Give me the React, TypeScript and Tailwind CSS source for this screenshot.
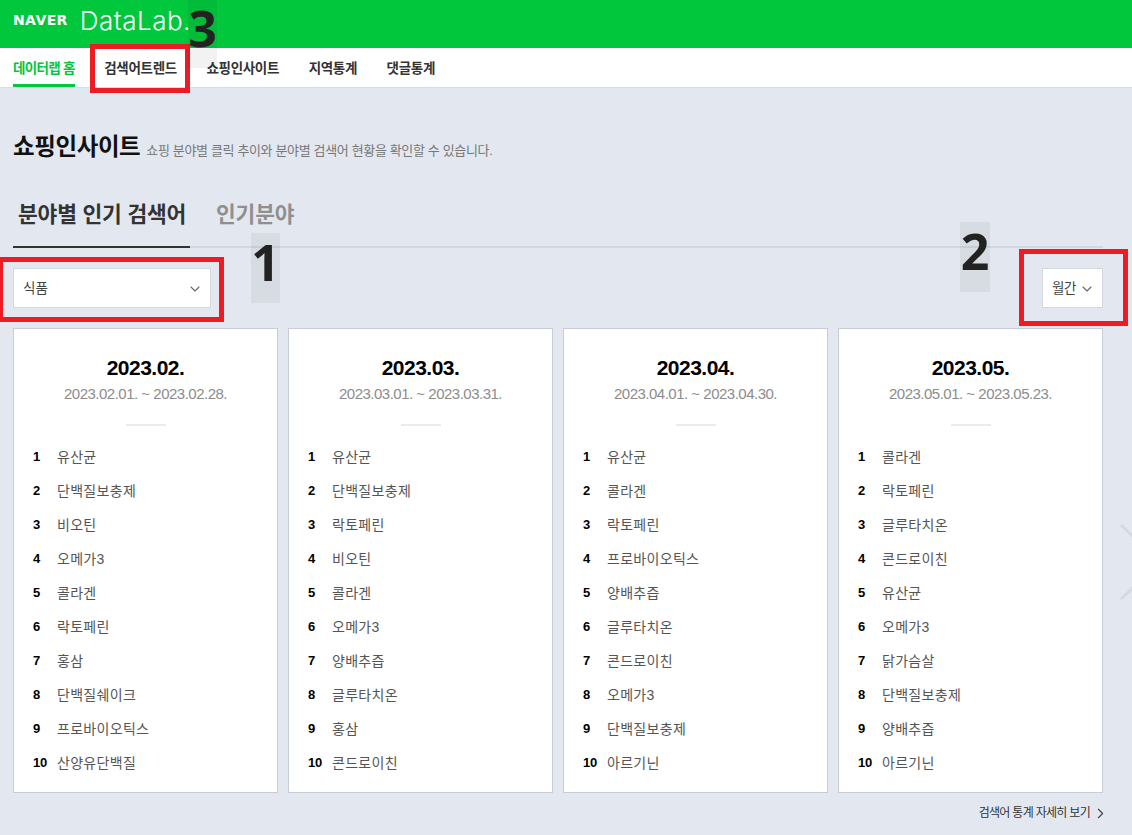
import { ChevronDown, ChevronRight } from 'lucide-react';

const font = { kr: "font-['Liberation_Sans','Noto_Sans_CJK_KR',sans-serif]" };

const navItems = ['데이터랩 홈', '검색어트렌드', '쇼핑인사이트', '지역통계', '댓글통계'];

const months = [
  {
    title: '2023.02.',
    range: '2023.02.01. ~ 2023.02.28.',
    items: ['유산균', '단백질보충제', '비오틴', '오메가3', '콜라겐', '락토페린', '홍삼', '단백질쉐이크', '프로바이오틱스', '산양유단백질'],
  },
  {
    title: '2023.03.',
    range: '2023.03.01. ~ 2023.03.31.',
    items: ['유산균', '단백질보충제', '락토페린', '비오틴', '콜라겐', '오메가3', '양배추즙', '글루타치온', '홍삼', '콘드로이친'],
  },
  {
    title: '2023.04.',
    range: '2023.04.01. ~ 2023.04.30.',
    items: ['유산균', '콜라겐', '락토페린', '프로바이오틱스', '양배추즙', '글루타치온', '콘드로이친', '오메가3', '단백질보충제', '아르기닌'],
  },
  {
    title: '2023.05.',
    range: '2023.05.01. ~ 2023.05.23.',
    items: ['콜라겐', '락토페린', '글루타치온', '콘드로이친', '유산균', '오메가3', '닭가슴살', '단백질보충제', '양배추즙', '아르기닌'],
  },
];

function MonthCard({ title, range, items }: { title: string; range: string; items: string[] }) {
  return (
    <div className="w-[265px] h-[465px] bg-white border border-[#c6ccd8] pt-[26px]">
      <p className="text-center text-[21px] leading-[26px] font-bold tracking-[-0.5px] text-black">{title}</p>
      <p className="text-center text-[15px] leading-[26px] tracking-[-0.5px] text-[#8c8c8c]">{range}</p>
      <div className="w-10 h-[2px] bg-[#e8ecf1] mx-auto mt-[17px] mb-[14px]" />
      <ol className="pl-[19px]">
        {items.map((item, i) => (
          <li key={i} className="flex items-center h-[34px]">
            <span className="w-[24px] text-[13px] font-bold tracking-[-0.3px] text-black">{i + 1}</span>
            <span className="text-[14px] tracking-[0.3px] text-[#555]">{item}</span>
          </li>
        ))}
      </ol>
    </div>
  );
}

export default function App() {
  return (
    <div className={`relative w-full h-[835px] overflow-hidden bg-[#e3e8f0] ${font.kr}`}>
      <header className="h-[48px] bg-[#00c73c] flex items-center pl-[13px] pb-[7px] gap-[12px]">
        <span className="text-[14px] font-bold tracking-[0.4px] text-white font-['DejaVu_Sans',sans-serif]">NAVER</span>
        <span className="text-[26px] font-light tracking-[0.5px] text-white font-['Inter',sans-serif]">DataLab.</span>
      </header>

      <nav className="h-[40px] bg-white border-b border-[#d9dde3] flex gap-[29.5px] pl-[13px]">
        {navItems.map((item, i) => (
          <a
            key={item}
            className={`h-[39px] flex items-center text-[13.5px] font-bold ${
              i === 0
                ? 'pt-[6px] text-[#00c73c] border-b-[3px] border-[#00c73c] tracking-[-0.7px]'
                : 'pt-[3px] text-[#333] tracking-[-0.3px]'
            }`}
          >
            {item}
          </a>
        ))}
      </nav>

      <main className="w-[1090px] ml-[13px]">
        <div className="flex items-baseline gap-[6px] pt-[42px]">
          <h1 className="text-[23.5px] leading-[34px] font-bold tracking-[-0.4px] text-[#111]">쇼핑인사이트</h1>
          <p className="text-[13px] tracking-[-0.35px] text-[#777]">쇼핑 분야별 클릭 추이와 분야별 검색어 현황을 확인할 수 있습니다.</p>
        </div>

        <div className="flex mt-[21px] h-[63px] border-b-2 border-[#d3d8e0]">
          <div className="h-[63px] w-[177px] pl-[5px] border-b-2 border-[#333] text-[21.5px] leading-[60px] font-bold tracking-[-0.2px] text-[#333]">
            분야별 인기 검색어
          </div>
          <div className="ml-[26px] text-[21.5px] leading-[60px] font-bold tracking-[-0.2px] text-[#8f8f8f]">인기분야</div>
        </div>

        <div className="flex justify-between mt-[20px]">
          <div className="w-[198px] h-[40px] bg-white border border-[#d3d8e0] flex items-center justify-between pt-[2px] pl-[9px] pr-[7px] text-[13.5px] text-[#444]">
            식품
            <ChevronDown size={16} strokeWidth={1.6} className="text-[#666]" />
          </div>
          <div className="w-[61px] h-[40px] bg-white border border-[#d3d8e0] flex items-center justify-center pt-[2px] pl-[2px] gap-[3px] text-[13.5px] tracking-[-0.5px] text-[#444]">
            월간
            <ChevronDown size={16} strokeWidth={1.6} className="text-[#666]" />
          </div>
        </div>

        <div className="flex gap-[10px] mt-[20px]">
          {months.map(m => (
            <MonthCard key={m.title} {...m} />
          ))}
        </div>

        <div className="flex justify-end items-center h-[40px] text-[12px] tracking-[-0.7px] text-[#333]">
          검색어 통계 자세히 보기
          <ChevronRight size={17} strokeWidth={1.6} className="ml-[2px] -mr-[6px] text-[#444]" />
        </div>
      </main>

      {/* next arrow, cut off by the window */}
      <svg className="absolute left-[1120px] top-[522px]" width="12" height="80" viewBox="0 0 12 80" fill="none">
        <path d="M1 3 L40 40 L1 77" stroke="#d5d9e1" strokeWidth="3" />
      </svg>

      {/* annotations on the screenshot */}
      <div className="absolute left-[90px] top-[44px] w-[100px] h-[49px] border-[5px] border-[#ed1c24]" />
      <div className="absolute -left-[2px] top-[257px] w-[226px] h-[65px] border-[5px] border-[#ed1c24]" />
      <div className="absolute left-[1019px] top-[249px] w-[109px] h-[77px] border-[5px] border-[#ed1c24]" />

      <div className="absolute left-[188px] top-0 w-[29px] h-[68px] pb-[12px] bg-black/5 flex items-center justify-center text-[50px] leading-none font-bold text-[#222] font-['Noto_Sans',sans-serif]">3</div>
      <div className="absolute left-[251px] top-[233px] w-[29px] h-[70px] pb-[12px] bg-black/5 flex items-center justify-center text-[50px] leading-none font-bold text-[#222] font-['Noto_Sans',sans-serif]">1</div>
      <div className="absolute left-[960px] top-[222px] w-[30px] h-[70px] pb-[12px] bg-black/5 flex items-center justify-center text-[50px] leading-none font-bold text-[#222] font-['Noto_Sans',sans-serif]">2</div>
    </div>
  );
}
